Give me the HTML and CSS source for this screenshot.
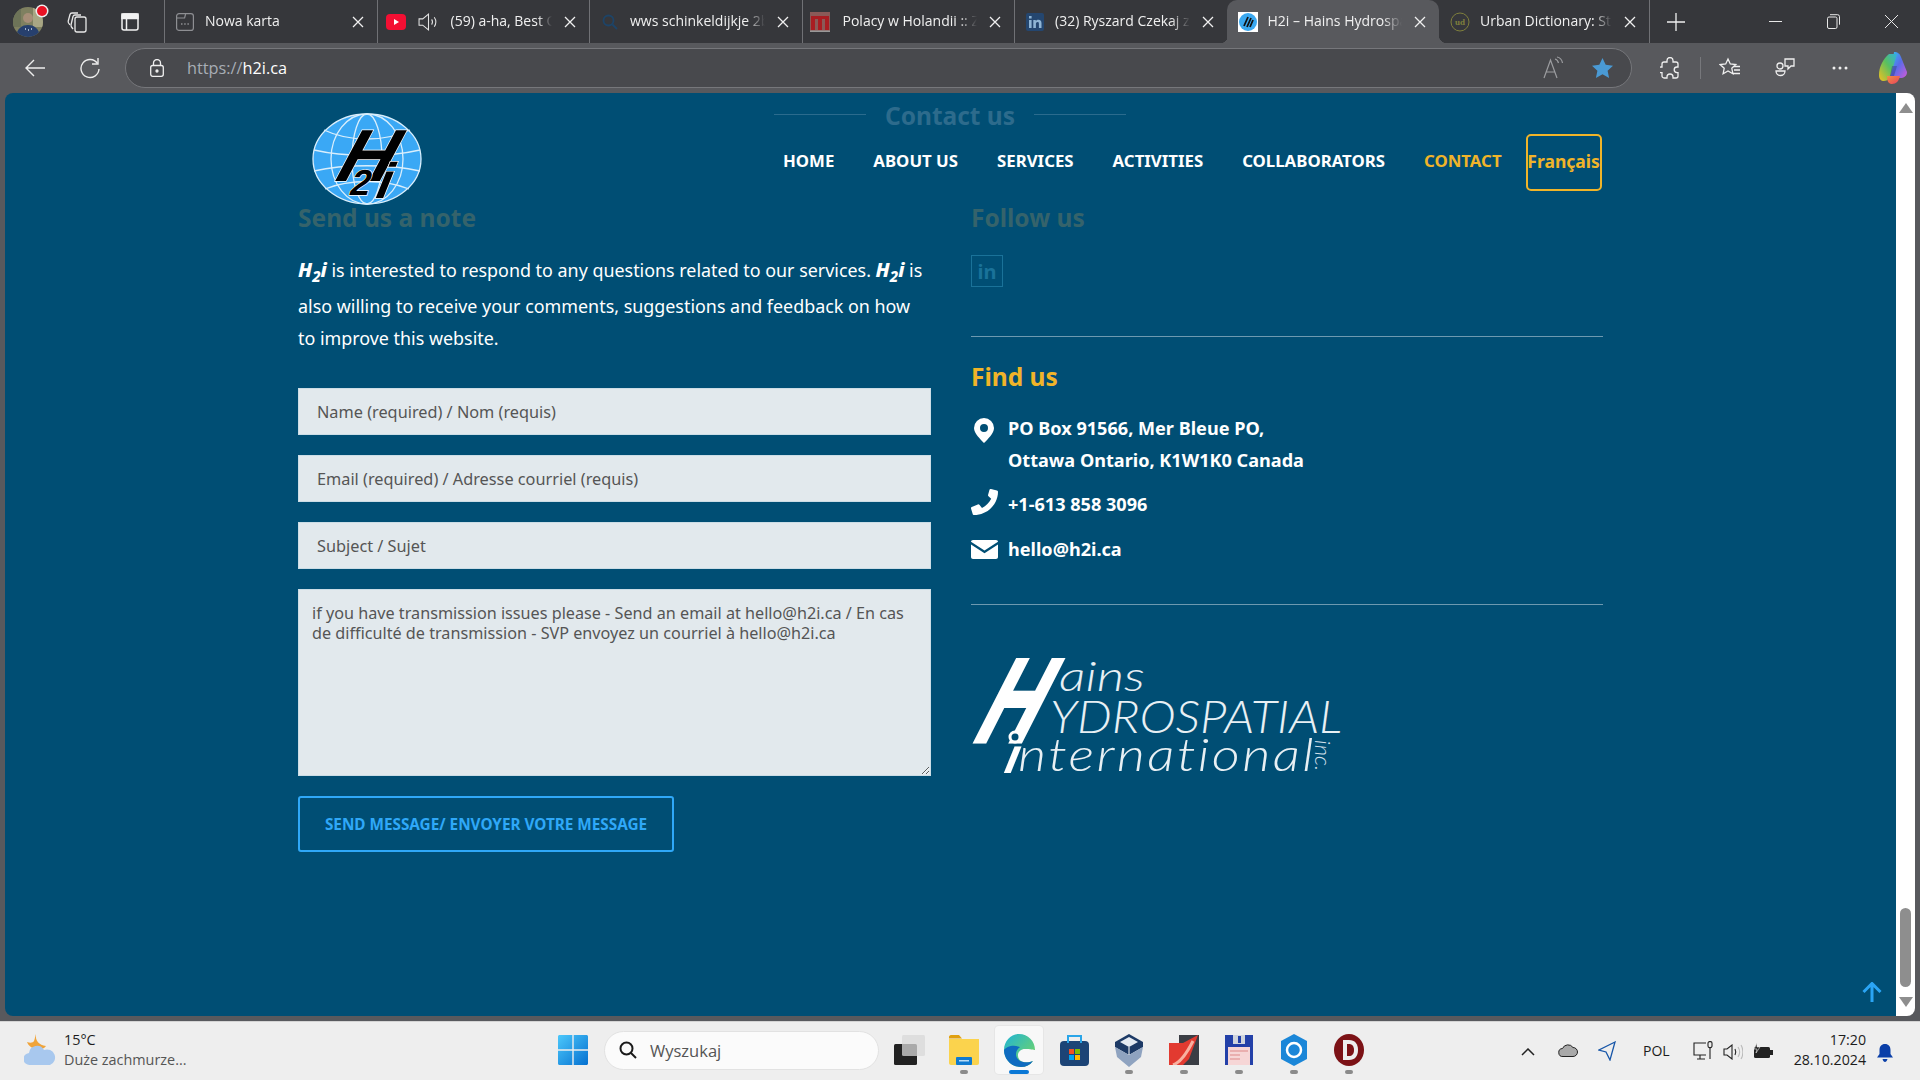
FILE: index.html
```html
<!DOCTYPE html>
<html lang="en">
<head>
<meta charset="utf-8">
<title>H2i – Hains Hydrospatial International</title>
<link rel="stylesheet" href="styles.css">
</head>
<body>
<div class="tabbar">
  <div class="profile">
    <svg width="30" height="30" viewBox="0 0 30 30"><defs><clipPath id="av"><circle cx="15" cy="15" r="15"/></clipPath></defs><g clip-path="url(#av)"><rect width="30" height="30" fill="#7f8060"/><rect x="20" width="10" height="20" fill="#a8a684"/><rect width="8" height="20" fill="#6d7358"/><path d="M3 30c1-9 6-12 12-12s11 3 12 12z" fill="#27406e"/><circle cx="15" cy="11" r="5" fill="#a78e78"/><path d="M12 22h1M15 23h1M18 22h1" stroke="#cdd6e8" stroke-width="1.500"/></g></svg>
    <span class="notif"></span>
  </div>
  <svg class="tb-ico workspace" width="22" height="22" viewBox="0 0 22 22" fill="none" stroke="#e8e8e8" stroke-width="1.300"><rect x="9" y="6" width="11" height="15" rx="2"/><path d="M7 18 5.500 16c-.6-.8-.6-1.500-.4-2.500L7 5.500c.3-1 1-1.500 2-1.500h6"/><path d="M4 14 2.600 12c-.5-.8-.5-1.500-.3-2.200L4 3.500C4.300 2.300 5 2 6 2h6"/></svg>
  <svg class="tb-ico tabact" width="18" height="18" viewBox="0 0 18 18" fill="none" stroke="#f2f2f2" stroke-width="1.500"><rect x="1" y="1" width="16" height="16" rx="2"/><path d="M5.500 5.500V17"/><rect x="1" y="1" width="16" height="4.500" fill="#f2f2f2"/></svg>
  <div class="tabs">
    <div class="tab">
      <svg class="fav" width="18" height="18" viewBox="0 0 18 18" fill="none" stroke="#8e8f93" stroke-width="1.200"><rect x=".6" y=".6" width="16.800" height="16.800" rx="2.500"/><path d="M.6 5h8l1-4"/><path d="M5 11h1.500M8.200 11h1.500M11.400 11h1.500" stroke-width="1.500"/></svg>
      <span class="tab-title">Nowa karta</span>
      <svg class="tab-x" width="12" height="12" viewBox="0 0 12 12"><path d="M1 1l10 10M11 1 1 11" stroke="#f0f0f0" stroke-width="1.300"/></svg>
    </div>
    <div class="tab">
      <svg class="fav yt" width="20" height="16" viewBox="0 0 20 16"><rect width="20" height="16" rx="4" fill="#f40f33"/><path d="M8 5l5 3-5 3z" fill="#fff"/></svg>
      <svg class="tab-audio" width="21" height="24" viewBox="0 0 20 20" fill="none" stroke="#e4e4e4" stroke-width="1"><path d="M1 7h3.500L10 2.500v15L4.500 13H1z"/><path d="M13 7.500c1 1.500 1 3.500 0 5M15.500 5.500c2 3 2 6 0 9"/></svg>
      <span class="tab-title">(59) a-ha, Best Of Songs Full</span>
      <svg class="tab-x" width="12" height="12" viewBox="0 0 12 12"><path d="M1 1l10 10M11 1 1 11" stroke="#f0f0f0" stroke-width="1.300"/></svg>
    </div>
    <div class="tab">
      <svg class="fav" width="18" height="18" viewBox="0 0 18 18" fill="none" stroke="#1d4468" stroke-width="1.800"><circle cx="7.500" cy="7.500" r="5"/><path d="M11.500 11.500 16 16"/></svg>
      <span class="tab-title">wws schinkeldijkje 2b Schinkel</span>
      <svg class="tab-x" width="12" height="12" viewBox="0 0 12 12"><path d="M1 1l10 10M11 1 1 11" stroke="#f0f0f0" stroke-width="1.300"/></svg>
    </div>
    <div class="tab">
      <svg class="fav fav-n" width="20" height="20" viewBox="0 0 20 20"><rect width="20" height="20" fill="#8a5a58"/><path d="M1 4h18v14h-4V7h-3v11H8V7H5v11H1z" fill="#a91d22"/><rect y="18.500" width="20" height="1.500" fill="#999"/></svg>
      <span class="tab-title">Polacy w Holandii :: Zobacz temat</span>
      <svg class="tab-x" width="12" height="12" viewBox="0 0 12 12"><path d="M1 1l10 10M11 1 1 11" stroke="#f0f0f0" stroke-width="1.300"/></svg>
    </div>
    <div class="tab">
      <svg class="fav" width="18" height="18" viewBox="0 0 18 18"><rect width="18" height="18" rx="2" fill="#24466f"/><path d="M3 7h2.600v8H3zM3 3h2.600v2.500H3zM7.300 7h2.500v1.200c.6-.9 1.500-1.400 2.700-1.400 2 0 3 1.300 3 3.500V15h-2.600v-4.200c0-1.100-.4-1.700-1.300-1.700s-1.700.7-1.700 1.800V15H7.300z" fill="#8fb4d4"/></svg>
      <span class="tab-title">(32) Ryszard Czekaj z Holandii</span>
      <svg class="tab-x" width="12" height="12" viewBox="0 0 12 12"><path d="M1 1l10 10M11 1 1 11" stroke="#f0f0f0" stroke-width="1.300"/></svg>
    </div>
    <div class="tab tab-active">
      <svg class="fav" width="20" height="20" viewBox="0 0 20 20"><rect width="20" height="20" fill="#fff"/><circle cx="10" cy="10" r="9" fill="#3aa8f0"/><path d="M6 14 10 5M9 15l4-9M12 15l3-7" stroke="#111" stroke-width="1.800"/></svg>
      <span class="tab-title">H2i – Hains Hydrospatial Inter</span>
      <svg class="tab-x" width="12" height="12" viewBox="0 0 12 12"><path d="M1 1l10 10M11 1 1 11" stroke="#f0f0f0" stroke-width="1.300"/></svg>
    </div>
    <div class="tab tab-last">
      <svg class="fav" width="20" height="20" viewBox="0 0 20 20"><circle cx="10" cy="10" r="9" fill="none" stroke="#7f7f3c" stroke-width="1"/><text class="ud" x="10" y="13" text-anchor="middle">ud</text></svg>
      <span class="tab-title">Urban Dictionary: Steve Jobs</span>
      <svg class="tab-x" width="12" height="12" viewBox="0 0 12 12"><path d="M1 1l10 10M11 1 1 11" stroke="#f0f0f0" stroke-width="1.300"/></svg>
    </div>
  </div>
  <svg class="newtab" width="18" height="18" viewBox="0 0 18 18"><path d="M9 0v18M0 9h18" stroke="#f0f0f0" stroke-width="1.300"/></svg>
  <div class="winctl">
    <svg width="13" height="13" viewBox="0 0 13 13"><path d="M0 6.500h13" stroke="#e8e8e8" stroke-width="1"/></svg>
    <svg width="13" height="15" viewBox="0 0 13 15" fill="none" stroke="#e8e8e8"><rect x=".5" y="3" width="9.500" height="11.500" rx="1.500"/><path d="M3 .7h7.500a2 2 0 0 1 2 2v8"/></svg>
    <svg width="13" height="13" viewBox="0 0 13 13"><path d="M0 0l13 13M13 0 0 13" stroke="#e8e8e8" stroke-width="1"/></svg>
  </div>
</div>

<div class="toolbar">
  <svg class="back" width="20" height="18" viewBox="0 0 20 18" fill="none" stroke="#ededed" stroke-width="1.400"><path d="M20 9H1M9 1 1 9l8 8"/></svg>
  <svg class="reload" width="20" height="22" viewBox="0 0 20 22" fill="none" stroke="#ededed" stroke-width="1.400"><path d="M17.500 6.500A9 9 0 1 0 19 12"/><path d="M18 1v6h-6"/></svg>
  <div class="omnibox">
    <svg class="lock" width="14" height="18" viewBox="0 0 14 18" fill="none" stroke="#efefef" stroke-width="1.300"><rect x=".7" y="6.500" width="12.600" height="10.800" rx="2"/><path d="M3.500 6.500V4a3.500 3.500 0 0 1 7 0v2.500"/><circle cx="7" cy="12" r="1" fill="#efefef"/></svg>
    <span class="url"><span class="url-scheme">https://</span>h2i.ca</span>
    <svg class="readaloud" width="20" height="24" viewBox="0 0 20 24" fill="none" stroke="#9c9da0" stroke-width="1.200"><path d="M1 22 7.500 4 14 22M3.500 16h8"/><path d="M12 3c2 .5 3 2 3.500 4M14 1c3 .5 5 3 5.500 6"/></svg>
    <svg class="star" width="21" height="20" viewBox="0 0 21 20"><path d="M10.500 0l3.200 6.800 7.300.9-5.400 5 1.500 7.300-6.600-3.700L3.900 20l1.500-7.300L0 7.700l7.300-.9z" fill="#4a9ad4"/></svg>
  </div>
  <svg class="tool ext" width="20" height="22" viewBox="0 0 20 22" fill="none" stroke="#efefef" stroke-width="1.300"><path d="M7 3.500a3 3 0 0 1 6 0V5h3c1 0 2 1 2 2v3h-1a2.800 2.800 0 0 0 0 5.600h1V19c0 1-1 2-2 2h-3v-1a3 3 0 0 0-6 0v1H4c-1 0-2-1-2-2v-3.400H1a2.800 2.800 0 0 1 0-5.600h1V7c0-1 1-2 2-2h3z"/></svg>
  <span class="tool-sep"></span>
  <svg class="tool fav-star" width="22" height="22" viewBox="0 0 22 22" fill="none" stroke="#efefef" stroke-width="1.300"><path d="M9 2l2.300 5 5.500.6-4 3.700 1.100 5.400L9 14l-4.900 2.700 1.100-5.400-4-3.700 5.500-.6z"/><path d="M15 9.500h6M15 13h6M14 16.500h7"/></svg>
  <svg class="tool collect" width="21" height="22" viewBox="0 0 21 22" fill="none" stroke="#efefef" stroke-width="1.300"><circle cx="5" cy="9" r="3"/><path d="M1 14h9a4.500 4.500 0 0 1-9 0z"/><path d="M10 2h9v7h-3l-3 3V9h-3z"/></svg>
  <svg class="tool dots" width="16" height="4" viewBox="0 0 16 4" fill="#efefef"><circle cx="2" cy="2" r="1.500"/><circle cx="8" cy="2" r="1.500"/><circle cx="14" cy="2" r="1.500"/></svg>
  <svg class="tool copilot" width="28" height="32" viewBox="0 0 28 32"><defs><linearGradient id="cp1" x1="0" y1="0" x2="1" y2="1"><stop offset="0" stop-color="#2fc4f0"/><stop offset=".5" stop-color="#5a6ce8"/><stop offset="1" stop-color="#d05ad8"/></linearGradient><linearGradient id="cp2" x1="0" y1="1" x2="1" y2="0"><stop offset="0" stop-color="#f0c020"/><stop offset=".55" stop-color="#58c060"/><stop offset="1" stop-color="#30b0e0"/></linearGradient><linearGradient id="cp3" x1="0" y1="0" x2="1" y2="1"><stop offset="0" stop-color="#f09040"/><stop offset="1" stop-color="#e84060"/></linearGradient></defs><path d="M15 0c4 0 6 2 7 5l6 15c0 4-3 6-7 6H11z" fill="url(#cp1)"/><path d="M10 2h8L12 22c-1 4-3 7-7 7-3 0-5-2-5-6 0-8 4-16 10-21z" fill="url(#cp2)"/><path d="M8 24h13c-1 5-4 8-8 8-3 0-5-2-5-8z" fill="url(#cp3)"/><path d="M13 14h5l-3 10h-4z" fill="#3c3d8c" fill-opacity=".5"/></svg>
</div>

<div class="viewport">
  <main class="page">
    <header class="site-header">
      <svg class="logo" width="110" height="92" viewBox="0 0 110 92">
        <ellipse cx="55" cy="46" rx="54" ry="45" fill="#3aa8f5"/>
        <g fill="none" stroke="#d8eefc" stroke-width="1.300">
          <ellipse cx="55" cy="46" rx="54" ry="45"/>
          <ellipse cx="55" cy="46" rx="36" ry="45"/>
          <ellipse cx="55" cy="46" rx="15" ry="45"/>
          <path d="M12 17c25 12 61 12 86 0M2 37c30 7 76 7 106 0M2 58c30-7 76-7 106 0M13 76c25-10 59-10 84 0"/>
        </g>
        <text class="logo-h" transform="translate(18 68) skewX(-28)" textLength="55" lengthAdjust="spacingAndGlyphs">H</text>
        <text class="logo-2" transform="translate(36 82) skewX(-16)">2</text>
        <text class="logo-i" transform="translate(60 85) skewX(-22)" textLength="15" lengthAdjust="spacingAndGlyphs">i</text>
      </svg>
      <nav class="nav">
        <a class="nav-link">HOME</a><a class="nav-link">ABOUT US</a><a class="nav-link">SERVICES</a><a class="nav-link">ACTIVITIES</a><a class="nav-link">COLLABORATORS</a><a class="nav-link nav-current">CONTACT</a>
        <a class="lang">Français</a>
      </nav>
    </header>
    <div class="wrap">
      <div class="title-row"><span class="title-rule"></span><h1>Contact us</h1><span class="title-rule"></span></div>
      <div class="cols">
        <section class="col-left">
          <h2 class="dim">Send us a note</h2>
          <p class="intro"><b class="brand">H<sub>2</sub>i</b> is interested to respond to any questions related to our services. <b class="brand">H<sub>2</sub>i</b> is also willing to receive your comments, suggestions and feedback on how to improve this website.</p>
          <form class="form">
            <input class="field" type="text" placeholder="Name (required) / Nom (requis)">
            <input class="field" type="text" placeholder="Email (required) / Adresse courriel (requis)">
            <input class="field" type="text" placeholder="Subject / Sujet">
            <textarea class="area" placeholder="if you have transmission issues please - Send an email at hello@h2i.ca / En cas de difficulté de transmission - SVP envoyez un courriel à hello@h2i.ca"></textarea>
            <button class="send" type="button">SEND MESSAGE/ ENVOYER VOTRE MESSAGE</button>
          </form>
        </section>
        <section class="col-right">
          <h2 class="dim">Follow us</h2>
          <a class="li-box">in</a>
          <hr class="rule rule-a">
          <h2 class="find">Find us</h2>
          <div class="contact-row row-addr">
            <span class="ci"><svg width="20" height="25" viewBox="0 0 20 25"><path fill-rule="evenodd" d="M10 0a10 10 0 0 1 10 10c0 5-6 11-10 15C6 21 0 15 0 10A10 10 0 0 1 10 0zm0 6a4 4 0 1 0 0 8 4 4 0 0 0 0-8z" fill="#fff"/></svg></span>
            <span>PO Box 91566, Mer Bleue PO,<br>Ottawa Ontario, K1W1K0 Canada</span>
          </div>
          <div class="contact-row row-phone">
            <span class="ci"><svg width="27" height="26" viewBox="0 0 27 26"><path d="M20 0l6 1.500c.6.200 1 .7 1 1.300C27 15.500 16.500 26 3 26c-.6 0-1.200-.4-1.300-1L0 19.500c-.2-.7.200-1.300.8-1.600l6-2.500c.6-.2 1.200 0 1.600.4l2.600 3.200c4-2 7.300-5.300 9.200-9.200L17.500 7.300c-.5-.4-.6-1-.4-1.600l1.400-4.900C18.700.2 19.300-.1 20 0z" fill="#fff"/></svg></span>
            <span>+1-613 858 3096</span>
          </div>
          <div class="contact-row row-mail">
            <span class="ci"><svg width="27" height="19" viewBox="0 0 27 19"><path d="M2 0h23c1 0 2 .7 2 1.800L13.500 10.500 0 1.800C0 .7 1 0 2 0zM0 4.500l13.500 8.700L27 4.500V17c0 1.100-.9 2-2 2H2c-1.100 0-2-.9-2-2z" fill="#fff"/></svg></span>
            <span>hello@h2i.ca</span>
          </div>
          <hr class="rule rule-b">
          <svg class="brand-logo" width="372" height="120" viewBox="0 0 372 120">
            <text class="bl-H" transform="translate(-3 87) skewX(-27)" textLength="58" lengthAdjust="spacingAndGlyphs">H</text>
            <circle class="bl-dot" cx="43" cy="82" r="5"/>
            <text class="bl-i" transform="translate(31 118) skewX(-12)">ı</text>
            <text class="bl-ains" x="87" y="36" textLength="86" lengthAdjust="spacingAndGlyphs">ains</text>
            <text class="bl-hydro" x="78" y="78" textLength="292" lengthAdjust="spacingAndGlyphs">YDROSPATIAL</text>
            <text class="bl-intl" x="46" y="116" textLength="298" lengthAdjust="spacingAndGlyphs">nternational</text>
            <text class="bl-inc" transform="translate(343 85) rotate(90)">inc.</text>
          </svg>
        </section>
      </div>
    </div>
    <svg class="to-top" width="20" height="20" viewBox="0 0 20 20" fill="none" stroke="#2aa5f5" stroke-width="3"><path d="M10 20V2M1.500 10 10 1.500 18.500 10"/></svg>
  </main>
  <aside class="scrollbar">
    <span class="sb-up"></span>
    <span class="sb-thumb"></span>
    <span class="sb-down"></span>
  </aside>
</div>

<footer class="taskbar">
  <div class="weather">
    <svg width="32" height="32" viewBox="0 0 32 32"><path d="M12 0c-1 7 3 11 10 12-2 3-6 4-10 3-5-1-8-4-9-7 3 1 6 1 7-1 1-2 1-5 2-7z" fill="#f0a43a"/><path d="M6 31a6 6 0 0 1-1-12 8 8 0 0 1 15-3 7.500 7.500 0 0 1 6 15z" fill="#a8c8ee"/></svg>
    <div class="w-text"><span class="w-temp">15°C</span><span class="w-desc">Duże zachmurze...</span></div>
  </div>
  <svg class="winlogo" width="30" height="30" viewBox="0 0 30 30"><defs><linearGradient id="wl" x1="0" y1="0" x2="1" y2="1"><stop offset="0" stop-color="#4cc8fb"/><stop offset="1" stop-color="#0570d0"/></linearGradient></defs><path d="M0 1.500C0 .7.700 0 1.500 0h12.800v14.300H0zM15.700 0h12.800c.8 0 1.500.7 1.500 1.500v12.800H15.700zM0 15.700h14.300V30H1.500C.7 30 0 29.300 0 28.500zM15.700 15.700H30v12.800c0 .8-.7 1.500-1.500 1.500H15.700z" fill="url(#wl)"/></svg>
  <div class="search">
    <svg width="18" height="18" viewBox="0 0 18 18" fill="none" stroke="#1a1a1a" stroke-width="2"><circle cx="7.500" cy="7.500" r="6"/><path d="M12 12l5 5"/></svg>
    <span>Wyszukaj</span>
  </div>
  <div class="apps">
    <span class="app"><svg width="31" height="30" viewBox="0 0 31 30"><rect y="9" width="23" height="21" rx="1.500" fill="#222"/><rect x="8" width="23" height="21" rx="1.500" fill="#d8d8d8" fill-opacity=".75"/></svg></span>
    <span class="app pip"><svg width="30" height="30" viewBox="0 0 30 30"><path d="M0 2c0-1 .7-2 2-2h8l3 3.500H0z" fill="#e0a010"/><path d="M0 4h30v24c0 1-.7 2-2 2H2c-1 0-2-1-2-2z" fill="#fbd34d"/><rect x="7" y="22" width="16" height="8" rx="1" fill="#0f7ad0"/><rect x="10" y="25" width="10" height="1.500" fill="#b8dcf6"/></svg></span>
    <span class="app app-active pip-active"><svg width="31" height="33" viewBox="0 0 31 33"><defs><linearGradient id="ed" x1="0" y1="0" x2="1" y2="1"><stop offset="0" stop-color="#1fb4d6"/><stop offset="1" stop-color="#7ed957"/></linearGradient></defs><path d="M15 0C7 0 0 7 0 16c0 9 7 17 17 17 5 0 9-2 12-6-4 2-14 3-15-5-.5-4 3-7 7-7 5 0 9 1 10 1C31 7 24 0 15 0z" fill="url(#ed)"/><path d="M0 16c0 9 7 17 17 17 5 0 9-2 12-6-7 3-17 1-17-7 0-4 3-6 4-7-7-3-14 0-16 3z" fill="#0f6bc0"/></svg></span>
    <span class="app"><svg width="29" height="32" viewBox="0 0 29 32"><rect y="7" width="29" height="25" rx="4" fill="#1c4476"/><path d="M8 9V2h13v7" fill="none" stroke="#2aa5e8" stroke-width="2"/><rect x="9" y="15" width="5" height="5" fill="#f25022"/><rect x="15" y="15" width="5" height="5" fill="#7fba00"/><rect x="9" y="21" width="5" height="5" fill="#00a4ef"/><rect x="15" y="21" width="5" height="5" fill="#ffb900"/></svg></span>
    <span class="app pip"><svg width="28" height="33" viewBox="0 0 28 33"><path d="M14 0l14 8v5l-14 8L0 13V8z" fill="#1d3a66"/><path d="M14 3l9 5-9 5-9-5z" fill="#e4eaf2"/><path d="M0 13l14 8 14-8-2 10-12 10L2 23z" fill="#8fa3c0"/><path d="M14 13v8" stroke="#fff"/></svg></span>
    <span class="app pip"><svg width="30" height="30" viewBox="0 0 30 30"><rect width="30" height="30" fill="#3a3d44"/><path d="M0 30V8h14L29 0 20 24l-6 6z" fill="#e23a30"/><path d="M4 30c6-2 12-8 20-24" stroke="#f8b0a0" stroke-width="3" fill="none"/><rect width="10" height="8" fill="#eee"/></svg></span>
    <span class="app pip"><svg width="28" height="30" viewBox="0 0 28 30"><path d="M0 0h28v30H0z" fill="#2340a8"/><rect x="8" width="12" height="9" fill="#cfd4dc"/><rect x="13" y="1" width="3" height="7" fill="#2340a8"/><rect x="3" y="12" width="22" height="18" fill="#f6d6d6"/><path d="M5 16h18M5 20h10M5 24h10" stroke="#d88" stroke-width="1"/></svg></span>
    <span class="app pip"><svg width="26" height="32" viewBox="0 0 26 32"><path d="M13 0l13 7v18l-13 7L0 25V7z" fill="#1a86d8"/><circle cx="13" cy="16" r="7" fill="none" stroke="#fff" stroke-width="2.500"/></svg></span>
    <span class="app pip"><svg width="30" height="32" viewBox="0 0 30 32"><ellipse cx="15" cy="16" rx="15" ry="16" fill="#7c1216"/><path d="M9 6h6c6 0 9 4 9 10s-3 10-9 10H9z" fill="#eee"/><path d="M13 10h2c3 0 5 2 5 6s-2 6-5 6h-2z" fill="#7c1216"/></svg></span>
  </div>
  <div class="tray">
    <svg class="t-chev" width="14" height="8" viewBox="0 0 14 8" fill="none" stroke="#222" stroke-width="1.500"><path d="M1 7l6-6 6 6"/></svg>
    <svg class="t-cloud" width="20" height="14" viewBox="0 0 20 14"><path d="M5 13.500a4 4 0 0 1-.5-8A6 6 0 0 1 15 4.500a4.500 4.500 0 0 1 0 9z" fill="#a9a9a9" stroke="#222" stroke-width="1"/></svg>
    <svg class="t-loc" width="18" height="20" viewBox="0 0 18 20" fill="none" stroke="#1756a8" stroke-width="1.300"><path d="M17 1 1 9l7 2 4 8z"/></svg>
    <span class="t-lang">POL</span>
    <svg class="t-net" width="20" height="20" viewBox="0 0 20 20" fill="none" stroke="#222" stroke-width="1.100"><path d="M13 2H1v12h12M4 18h8M7 14v4"/><rect x="15" y=".6" width="4" height="6" rx="1.500"/><path d="M17 7v11"/></svg>
    <svg class="t-vol" width="20" height="16" viewBox="0 0 20 16" fill="none" stroke="#222" stroke-width="1.100"><path d="M1 5h3l5-4v14l-5-4H1z"/><path d="M12 5c1 2 1 4 0 6"/><path d="M15 3c2 3 2 7 0 10M18 1c2.500 4 2.500 10 0 14" stroke="#bbb"/></svg>
    <svg class="t-bat" width="20" height="16" viewBox="0 0 20 16"><rect x="1" y="4" width="16" height="11" rx="1.500" fill="#222"/><rect x="17" y="7" width="3" height="5" fill="#222"/><path d="M4 0l-3 6h3l-1 4 4-6H4z" fill="#222" stroke="#eee" stroke-width=".6"/></svg>
    <div class="clock"><span>17:20</span><span>28.10.2024</span></div>
    <svg class="t-bell" width="16" height="18" viewBox="0 0 16 18"><path d="M8 0c3.500 0 5.500 2.500 5.500 6v4l2.500 3.500H0L2.500 10V6C2.500 2.500 4.500 0 8 0zM5.500 15h5C10 17 9 18 8 18s-2-1-2.500-3z" fill="#0b3fa8"/></svg>
  </div>
</footer>
</body>
</html>
```

FILE: styles.css
```css
* { box-sizing: border-box; }
html, body { margin: 0; height: 100%; overflow: hidden; }
body {
  width: 1920px; height: 1080px;
  display: flex; flex-direction: column;
  font-family: "Noto Sans", "Open Sans", sans-serif;
  background: #58595d;
}

/* browser tab strip */
.tabbar {
  height: 43px; flex: none; background: #36373b;
  display: flex; align-items: center; color: #f0f0f0;
  font-family: "Open Sans", "Noto Sans", sans-serif;
}
.profile { position: relative; width: 30px; height: 30px; margin-left: 13px; flex: none; }
.notif { position: absolute; right: -4px; top: -1px; width: 10px; height: 10px; border-radius: 50%; background: #e81123; box-shadow: 0 0 0 1.500px #eee; }
.workspace { margin-left: 23px; flex: none; }
.tabact { margin-left: 33px; margin-right: 25px; flex: none; }
.tabs { display: flex; height: 43px; flex: none; }
.tab {
  width: 212.5px; height: 43px; display: flex; align-items: center;
  padding: 0 13px 0 10px; position: relative; font-size: 14px;
  border-left: 1px solid #707175;
  background-clip: padding-box;
}
.fav { flex: none; width: 20px; margin-right: 10px; }
.tab .fav.yt { margin-right: 12px; margin-left: -2px; }
.tab .fav.fav-n { margin-left: -3px; margin-right: 13px; }
.ud { font: 700 9px "Liberation Serif", serif; fill: #7f7f3c; }
.tab-audio { flex: none; margin-right: 12px; }
.tab-title {
  flex: 1; min-width: 0; white-space: nowrap; overflow: hidden; padding-bottom: 2px;
  -webkit-mask-image: linear-gradient(to right, #000 86%, transparent 100%);
  mask-image: linear-gradient(to right, #000 86%, transparent 100%);
}
.tab-x { flex: none; margin-left: 12px; }
.tab-active { background: #58595d; border-left-color: transparent; border-radius: 10px 10px 0 0; }
.tab-active + .tab { border-left-color: transparent; }
.tab-active::before, .tab-active::after {
  content: ""; position: absolute; bottom: 0; width: 8px; height: 8px;
}
.tab-active::before { left: -8px; background: radial-gradient(circle at 0 0, transparent 8px, #58595d 8.500px); }
.tab-active::after { right: -8px; background: radial-gradient(circle at 100% 0, transparent 8px, #58595d 8.500px); }
.tab-last { border-right: 1px solid #707175; width: 211px; }
.newtab { margin-left: 17px; flex: none; }
.winctl { margin-left: auto; display: flex; align-items: center; gap: 45px; padding-right: 22px; }

/* toolbar */
.toolbar {
  height: 50px; flex: none; background: #58595d;
  display: flex; align-items: center;
}
.back { margin-left: 25px; flex: none; }
.reload { margin-left: 35px; flex: none; }
.omnibox {
  margin-left: 25px; width: 1507px; height: 40px; flex: none;
  border: 1.500px solid #76777b; border-radius: 20px; background: #48494d;
  display: flex; align-items: center; padding: 0 18px 0 24px;
}
.url { margin-left: 23px; font-size: 16.3px; color: #fff; font-family: "Open Sans", sans-serif; }
.url-scheme { color: #a7adb5; }
.readaloud { margin-left: auto; }
.star { margin-left: 29px; }
.tool { flex: none; }
.ext { margin-left: 28px; }
.tool-sep { width: 1px; height: 22px; background: #77787c; margin-left: 20px; flex: none; }
.fav-star { margin-left: 18px; }
.collect { margin-left: 34px; }
.dots { margin-left: 36px; }
.copilot { margin-left: 31px; }

/* viewport */
.viewport { height: 923px; flex: none; display: flex; padding: 0 5px; }
.page {
  position: relative; width: 1891px; height: 923px; background: #004e74;
  border-radius: 8px 0 0 8px; overflow: hidden; color: #fff;
}
.scrollbar {
  width: 19px; height: 923px; background: #fff; border-radius: 0 8px 8px 0;
  position: relative; display: flex; flex-direction: column; align-items: center;
}
.sb-up { margin-top: 10px; border: 6px solid transparent; border-top: 0; border-bottom: 10px solid #8e8e8e; border-left-width: 7px; border-right-width: 7px; }
.sb-thumb { margin-top: auto; width: 11px; height: 79px; background: #8e8e8e; border-radius: 6px; }
.sb-down { margin-top: 10px; margin-bottom: 9px; border: 7px solid transparent; border-bottom: 0; border-top: 10px solid #8e8e8e; }

.site-header { position: absolute; left: 0; top: 0; width: 100%; height: 110px; }
.logo { position: absolute; left: 307px; top: 20px; }
.logo-h { font: 700 74px "Liberation Sans", sans-serif; fill: #000; stroke: #fff; stroke-width: 1.400px; paint-order: stroke; }
.logo-i { font: 700 50px "Liberation Sans", sans-serif; fill: #000; stroke: #fff; stroke-width: 1.400px; paint-order: stroke; }
.logo-2 { font: 700 36px "Liberation Sans", sans-serif; fill: #000; stroke: #fff; stroke-width: 1.400px; paint-order: stroke; }
.nav { position: absolute; left: 778px; top: 41px; height: 57px; display: flex; align-items: center; gap: 39px; font-size: 16.8px; font-weight: 700; }
.nav-link { padding-bottom: 5px; }
.nav-current { color: #f0b429; }
.lang { color: #f0b429; margin-left: -15px; width: 76px; height: 57px; padding-bottom: 3px; font-size: 17.5px; border: 2px solid #f0b429; border-radius: 5px; display: flex; align-items: center; justify-content: center; white-space: nowrap; }

.wrap { margin-left: 293px; width: 1305px; padding-top: 7px; }
.title-row { display: flex; justify-content: center; align-items: center; gap: 19px; height: 32px; padding-right: 1px; }
.title-rule { width: 92px; height: 1px; background: #2b6b8d; margin-bottom: 3px; }
h1 { margin: 0; font-size: 24.5px; line-height: 32px; font-weight: 700; color: #2d6b8c; }
.cols { display: grid; grid-template-columns: 633px 632px; column-gap: 40px; margin-top: 70px; }
h2 { margin: 0; font-size: 24.5px; line-height: 32px; font-weight: 700; }
.dim { color: #35636b; }

.intro { margin: 20px 0 0; font-size: 17.9px; line-height: 32px; width: 633px; }
.brand { font-style: italic; font-weight: 800; font-size: 20px; }
.brand sub { font-size: 15px; line-height: 28px; }
.form { display: flex; flex-direction: column; gap: 20px; margin-top: 34px; }
.field, .area {
  display: block; width: 633px; border: 1px solid #cbdde6; background: #e2e9ed;
  font-family: "Noto Sans", sans-serif; color: #555; outline: 0; border-radius: 0;
}
.field { height: 47px; padding: 0 18px; font-size: 16.3px; }
.field::placeholder, .area::placeholder { color: #555; opacity: 1; }
.area { height: 187px; padding: 13px; font-size: 16.2px; line-height: 20px; resize: vertical; }
.send {
  align-self: flex-start; width: 376px; height: 56px; background: transparent;
  border: 2px solid #2fa8f8; border-radius: 3px; color: #2fa8f8;
  font-family: "Noto Sans", sans-serif; font-size: 15.3px; font-weight: 700; padding: 0;
}

.li-box { display: flex; width: 32px; height: 32px; margin-top: 21px; border: 1px solid #1a7299; color: #1a7299; font-size: 20px; font-weight: 700; align-items: center; justify-content: center; }
.rule { border: 0; height: 1px; background: #6d99b0; margin: 0; }
.rule-a { margin-top: 49px; }
.find { color: #f0b429; margin-top: 24px; }
.contact-row { display: flex; font-size: 18.1px; font-weight: 700; line-height: 32px; }
.ci { width: 37px; flex: none; display: flex; }
.row-addr { margin-top: 19px; }
.row-addr .ci { padding: 6px 0 0 3px; }
.row-phone { margin-top: 12px; }
.row-phone .ci { padding-top: 1px; }
.row-mail { margin-top: 13px; }
.row-mail .ci { padding-top: 7px; }
.rule-b { margin-top: 39px; }
.brand-logo { display: block; margin: 50px 0 0 1px; overflow: visible; }
.bl-H { font: 700 120px "Liberation Sans", sans-serif; fill: #fff; stroke: #fff; stroke-width: 3px; }
.bl-dot { fill: #004e74; stroke: #fff; stroke-width: 3px; }
.bl-i { font: italic 900 50px "Liberation Sans", sans-serif; fill: #fff; }
.bl-ains, .bl-hydro, .bl-intl { font-family: Lato, sans-serif; font-style: italic; font-weight: 300; fill: #e8f0f4; }
.bl-ains { font-size: 42px; }
.bl-hydro { font-size: 46px; }
.bl-intl { font-size: 46px; letter-spacing: 2px; }
.bl-inc { font: italic 300 22px Lato, sans-serif; fill: #cfdfe8; }
.to-top { position: absolute; left: 1857px; top: 889px; }

/* Windows taskbar */
.taskbar {
  height: 59px; flex: none; margin-top: 5px; background: #eeeeee; padding-bottom: 2px;
  border-top: 1px solid #d4d4d4; display: flex; align-items: center; color: #1c1c1c;
  position: relative; font-family: "Open Sans", "Noto Sans", sans-serif;
}
.weather { display: flex; align-items: center; gap: 8px; margin-left: 24px; width: 534px; flex: none; }
.w-text { display: flex; flex-direction: column; font-size: 14.4px; line-height: 20px; }
.w-desc { color: #555; }
.winlogo { flex: none; }
.search {
  margin-left: 16px; width: 275px; height: 39px; flex: none; background: #fbfbfb;
  border: 1px solid #e2e2e2; border-radius: 20px; display: flex; align-items: center;
  padding-left: 14px; gap: 13px; font-size: 16.5px; color: #555;
}
.apps { display: flex; align-items: center; margin-left: 6px; gap: 7px; }
.app { width: 48px; height: 48px; display: flex; align-items: center; justify-content: center; position: relative; flex: none; border-radius: 4px; }
.app-active { background: #f8f8f8; box-shadow: 0 0 0 1px #e6e6e6; }
.pip::after { content: ""; position: absolute; bottom: 0; left: 20px; width: 8px; height: 4px; border-radius: 2px; background: #8a8a8a; }
.pip-active::after { content: ""; position: absolute; bottom: 0; left: 14px; width: 20px; height: 4px; border-radius: 2px; background: #0a78d6; }
.tray { position: absolute; left: 0; top: 0; width: 100%; height: 58px; pointer-events: none; }
.tray > * { position: absolute; }
.t-chev { left: 1521px; top: 26px; }
.t-cloud { left: 1558px; top: 21px; }
.t-loc { left: 1598px; top: 19px; }
.t-lang { left: 1643px; top: 19px; font-size: 14px; line-height: 20px; }
.t-net { left: 1693px; top: 19px; }
.t-vol { left: 1723px; top: 22px; }
.t-bat { left: 1753px; top: 21px; }
.clock { right: 54px; top: 8px; display: flex; flex-direction: column; align-items: flex-end; font-size: 14.2px; line-height: 20px; }
.t-bell { left: 1877px; top: 22px; }
```
